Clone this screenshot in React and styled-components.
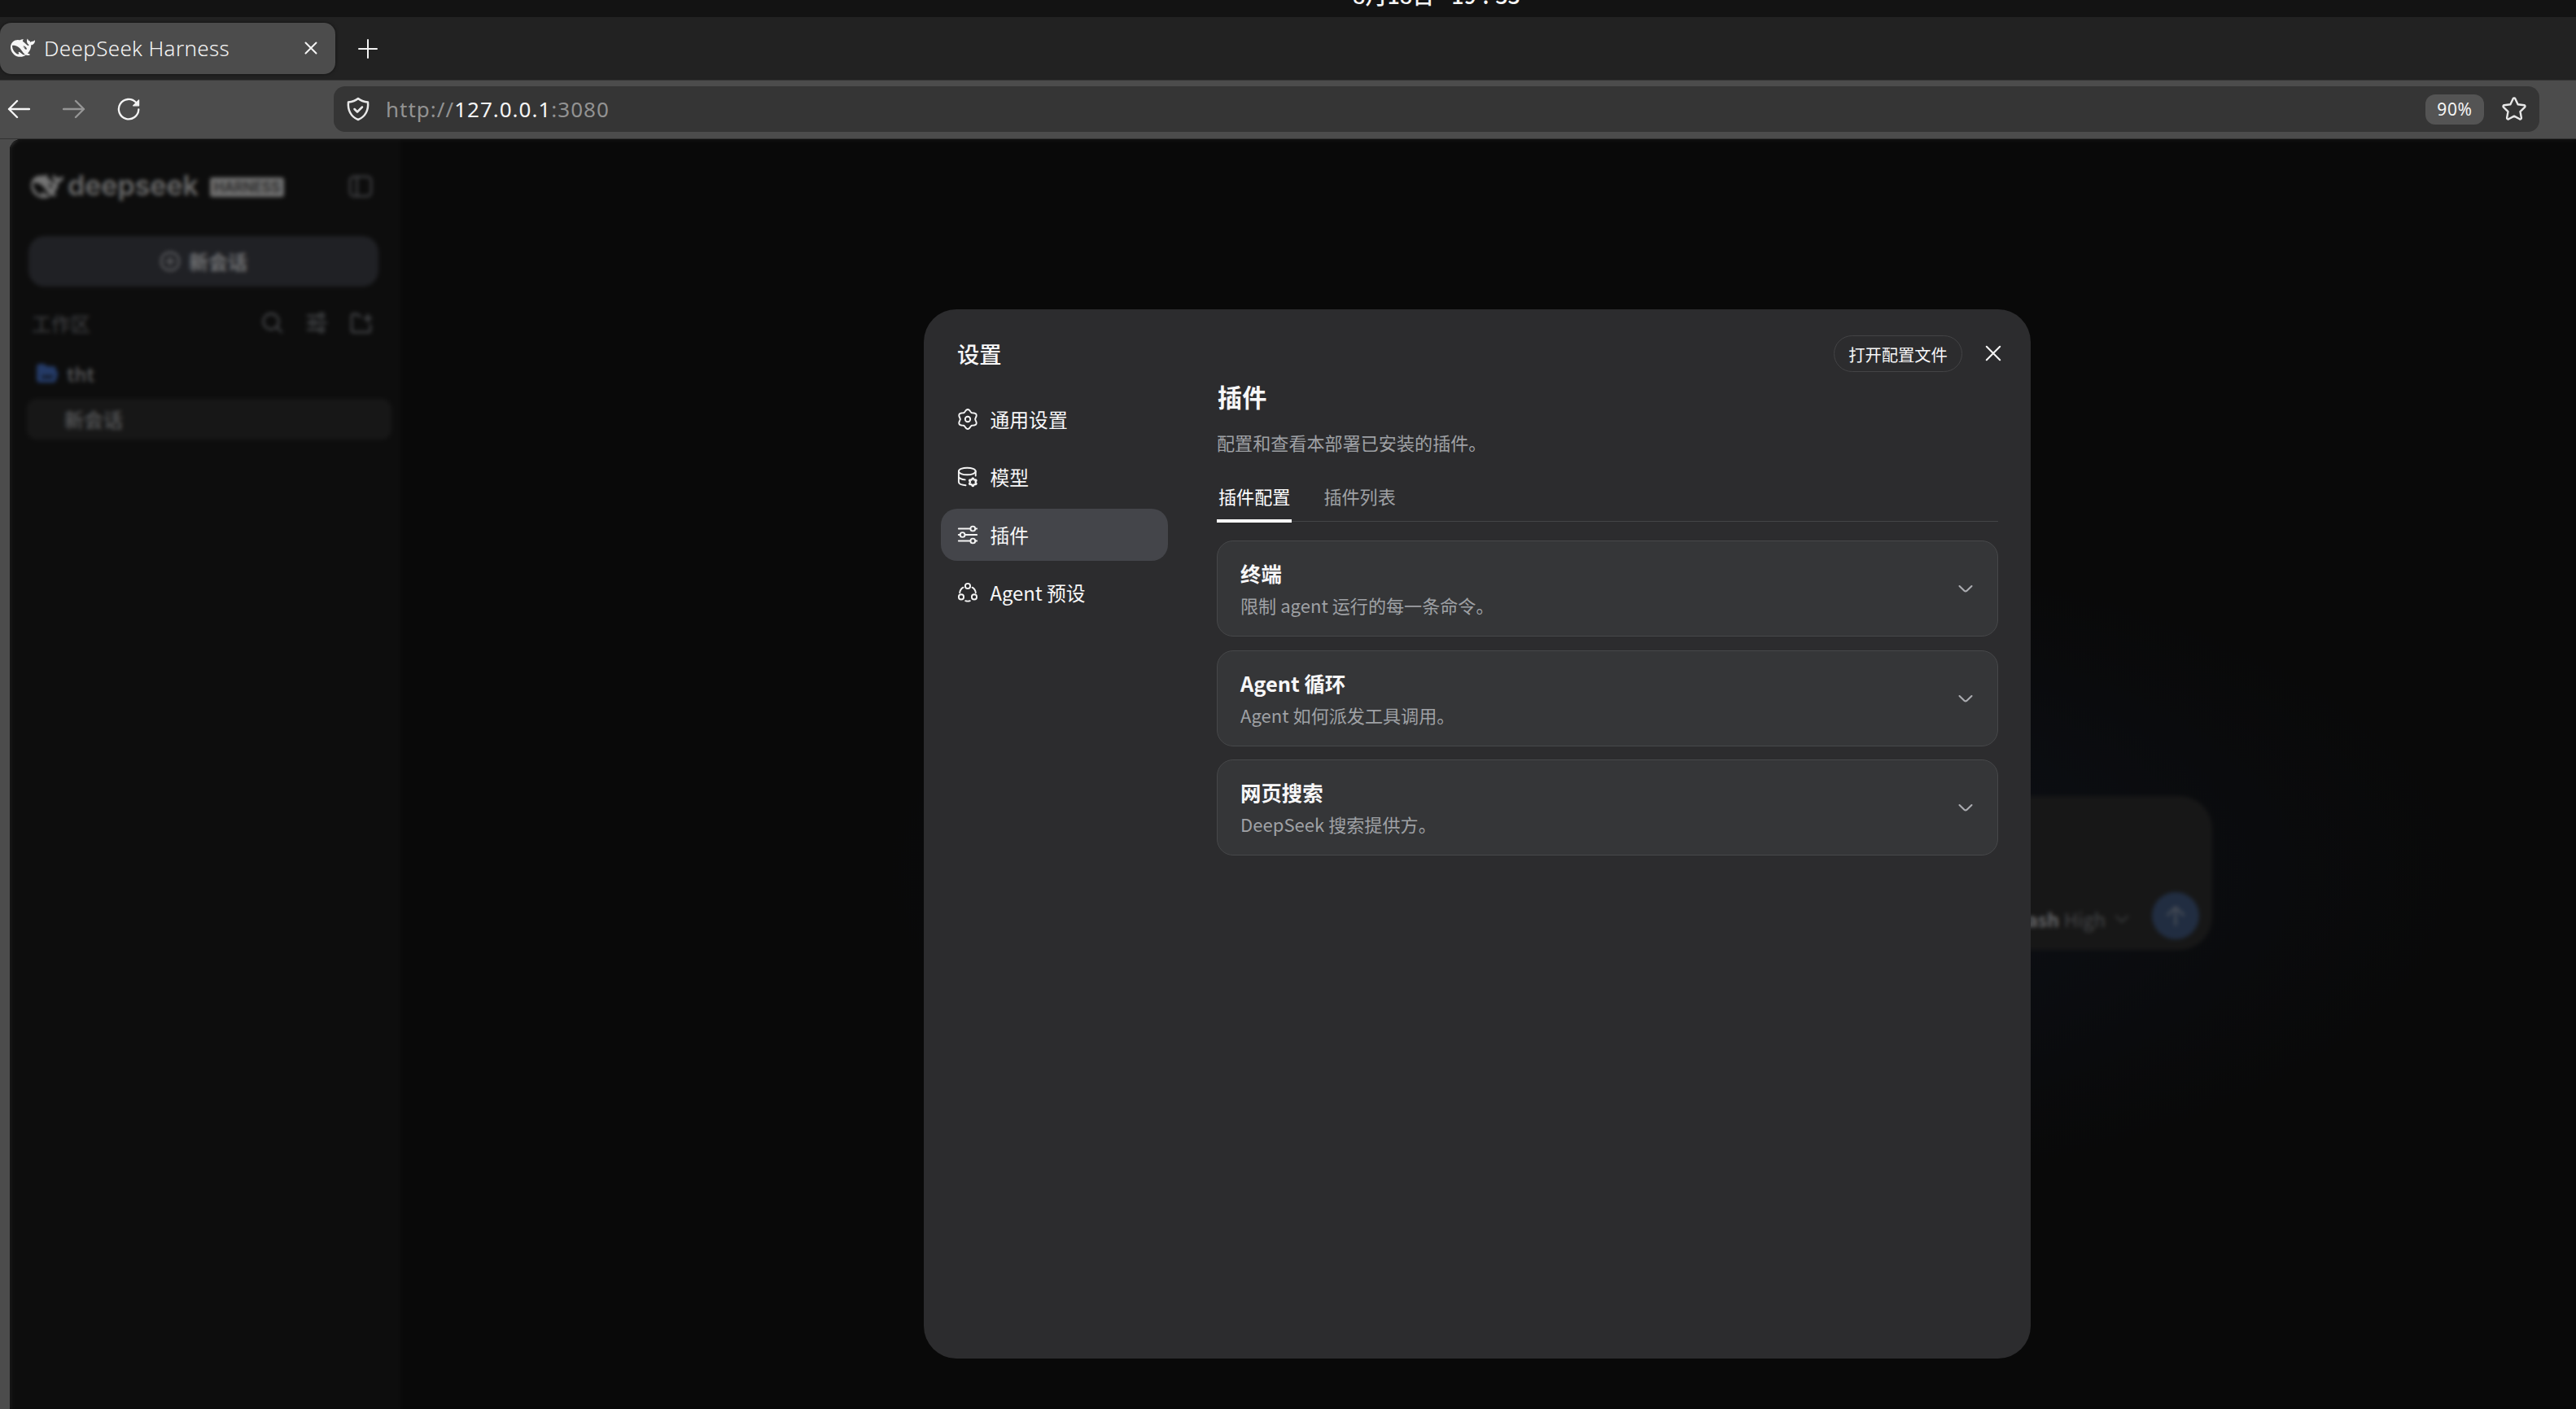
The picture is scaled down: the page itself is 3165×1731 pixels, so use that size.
import styled, { createGlobalStyle, css } from 'styled-components';

const GlobalStyle = createGlobalStyle`
	* {
		box-sizing: border-box;
	}

	body {
		margin: 0;
		background: #090909;
		font-family: 'Noto Sans CJK SC', sans-serif;
	}

	button {
		margin: 0;
		padding: 0;
		border: 0;
		background: none;
		color: inherit;
		font: inherit;
	}

	svg {
		display: block;
		flex: none;
	}
`;

const NAV = [
	{ label: '通用设置', Icon: GearIcon },
	{ label: '模型', Icon: ModelIcon },
	{ label: '插件', Icon: SlidersIcon, active: true },
	{ label: 'Agent 预设', Icon: AgentIcon },
];

const PLUGINS = [
	{ title: '终端', text: '限制 agent 运行的每一条命令。' },
	{ title: 'Agent 循环', text: 'Agent 如何派发工具调用。' },
	{ title: '网页搜索', text: 'DeepSeek 搜索提供方。' },
];

export default function App() {
	return (
		<Screen>
			<GlobalStyle />
			<SystemBar>
				<Clock>8月18日&ensp; 19 : 33</Clock>
			</SystemBar>
			<TabStrip>
				<BrowserTab>
					<Whale size={30} />
					<TabTitle>DeepSeek Harness</TabTitle>
					<Stroke size={16} box={16} width={2}>
						<path d="M1.5 1.5l13 13M14.5 1.5l-13 13" />
					</Stroke>
				</BrowserTab>
				<Stroke size={24} box={24} width={2}>
					<path d="M12 1v22M1 12h22" />
				</Stroke>
			</TabStrip>
			<Toolbar>
				<NavButtons>
					<Stroke size={28} box={28} width={2.4}>
						<path d="M27 14H2M12 4L2 14l10 10" />
					</Stroke>
					<Stroke size={28} box={28} width={2.4} color="#959595">
						<path d="M1 14h25M16 4l10 10-10 10" />
					</Stroke>
					<Stroke size={28} box={28} width={2.3}>
						<path d="M26.3 14.5A12.2 12.2 0 1 1 23 5.8" />
						<path d="M26.6 2.8v7h-7z" fill="currentColor" strokeWidth="1.2" />
					</Stroke>
				</NavButtons>
				<AddressBar>
					<Stroke size={30} box={30} width={2.5} color="#e8e8e8">
						<path d="M15 2c3 2.600 7 4 12 4.500C28 16 24 24.500 15 28 6 24.500 2 16 3 6.500 8 6 12 4.600 15 2z" />
						<path d="M10.500 15l3.500 3.500 6-6" />
					</Stroke>
					<Url>
						http://<b>127.0.0.1</b>:3080
					</Url>
					<ZoomChip>90%</ZoomChip>
					<Stroke size={32} box={32} width={2.4} color="#e8e8e8">
						<path d="M14.700 3.200a1.500 1.500 0 0 1 2.600 0l3.300 7 7.700 1a1.500 1.500 0 0 1 .8 2.500l-5.600 5.400 1.400 7.600a1.500 1.500 0 0 1-2.100 1.600L16 24.600l-6.800 3.700a1.500 1.500 0 0 1-2.100-1.600l1.400-7.600-5.600-5.400a1.500 1.500 0 0 1 .8-2.500l7.700-1z" />
					</Stroke>
				</AddressBar>
			</Toolbar>
			<Viewport>
				<Page>
					<Sidebar />
					<Main>
						<Composer>
							<ModelName>Flash</ModelName>
							<Effort>High</Effort>
							<Stroke size={18} box={18} width={2} color="#3a3b3d">
								<path d="M2 5.500l7 7 7-7" />
							</Stroke>
							<SendButton>
								<Stroke size={26} box={26} width={3} color="#454b55">
									<path d="M13 24V3M3.500 12L13 2.500 22.500 12" />
								</Stroke>
							</SendButton>
						</Composer>
					</Main>
					<Backdrop>
						<Settings />
					</Backdrop>
				</Page>
			</Viewport>
		</Screen>
	);
}

function Sidebar() {
	return (
		<SidebarPanel>
			<Brand>
				<Whale size={40} />
				<Wordmark>deepseek</Wordmark>
				<BrandBadge>HARNESS</BrandBadge>
				<Stroke size={30} box={30} width={2.4} color="#434447">
					<rect x="2" y="3" width="26" height="24" rx="5" />
					<path d="M10.500 3v24" />
				</Stroke>
			</Brand>
			<NewChat>
				<Stroke size={26} box={26} width={2.4} color="#5c5d60">
					<circle cx="13" cy="13" r="11" />
					<path d="M13 8v10M8 13h10" />
				</Stroke>
				<Label>新会话</Label>
			</NewChat>
			<SectionRow>
				<span>工作区</span>
				<Stroke size={27} box={27} width={2.3} color="#484a4d">
					<circle cx="12" cy="12" r="9.500" />
					<path d="M19 19l6 6" />
				</Stroke>
				<Stroke size={27} box={27} width={2.3} color="#484a4d">
					<path d="M2 5h13M2 13.500h3M12 13.500h13M2 22h13" />
					<circle cx="19" cy="5" r="3" />
					<circle cx="8.500" cy="13.500" r="3" />
					<circle cx="19" cy="22" r="3" />
				</Stroke>
				<Stroke size={27} box={27} width={2.3} color="#484a4d">
					<path d="M13 5.500h-2L9 3H4a2 2 0 0 0-2 2v18a2 2 0 0 0 2 2h19a2 2 0 0 0 2-2v-7M22 3.500v9M17.500 8h9" />
				</Stroke>
			</SectionRow>
			<FolderRow>
				<svg width="30" height="28" viewBox="0 0 30 28">
					<path
						d="M2 6a4 4 0 0 1 4-4h5l4 3h7a4 4 0 0 1 4 4v2a3 3 0 0 1 2 4l-2 7a4 4 0 0 1-4 3H6a4 4 0 0 1-4-4z"
						fill="#243a66"
					/>
					<path d="M9 16h14l-2 4H8z" fill="#131a28" />
				</svg>
				<Label>tht</Label>
			</FolderRow>
			<SessionRow>
				<Label>新会话</Label>
			</SessionRow>
		</SidebarPanel>
	);
}

function Settings() {
	return (
		<Dialog>
			<DialogHeader>
				<DialogTitle>设置</DialogTitle>
				<PillButton>打开配置文件</PillButton>
				<Stroke size={20} box={20} width={2.1}>
					<path d="M1.800 1.800l16.400 16.400M18.200 1.800L1.800 18.200" />
				</Stroke>
			</DialogHeader>
			<DialogBody>
				<NavList>
					{NAV.map(({ label, Icon, active }) => (
						<NavItem key={label} $active={active}>
							<Icon />
							<Label>{label}</Label>
						</NavItem>
					))}
				</NavList>
				<Content>
					<Heading>插件</Heading>
					<Lead>配置和查看本部署已安装的插件。</Lead>
					<Tabs>
						<Tab $active>插件配置</Tab>
						<Tab>插件列表</Tab>
					</Tabs>
					<CardList>
						{PLUGINS.map(({ title, text }) => (
							<Card key={title}>
								<div>
									<CardTitle>{title}</CardTitle>
									<CardText>{text}</CardText>
								</div>
								<Stroke size={20} box={20} width={2.1} color="#abacb1">
									<path d="M2.500 7l5.900 5.700q1.600 1.500 3.200 0l5.900-5.700" />
								</Stroke>
							</Card>
						))}
					</CardList>
				</Content>
			</DialogBody>
		</Dialog>
	);
}

function Stroke({ size, box, width, color = '#f4f4f4', children }) {
	return (
		<svg
			width={size}
			height={size}
			viewBox={`0 0 ${box} ${box}`}
			fill="none"
			stroke="currentColor"
			strokeWidth={width}
			strokeLinecap="round"
			strokeLinejoin="round"
			color={color}
		>
			{children}
		</svg>
	);
}

function Whale({ size }) {
	return (
		<svg width={size} height={size} viewBox="0 0 24 24" fill="currentColor">
			<path d="M23.748 4.482c-.254-.124-.364.113-.512.234-.051.039-.094.09-.137.136-.372.397-.806.657-1.373.626-.829-.046-1.537.214-2.163.848-.133-.782-.575-1.248-1.247-1.548-.352-.156-.708-.311-.955-.65-.172-.241-.219-.51-.305-.774-.055-.16-.11-.323-.293-.35-.2-.031-.278.136-.356.276-.313.572-.434 1.202-.422 1.84.027 1.436.633 2.58 1.838 3.393.137.093.172.187.129.323-.082.28-.18.552-.266.833-.055.179-.137.217-.329.14a5.526 5.526 0 01-1.736-1.18c-.857-.828-1.631-1.742-2.597-2.458a11.365 11.365 0 00-.689-.471c-.985-.957.13-1.743.388-1.836.27-.098.093-.432-.779-.428-.872.004-1.67.295-2.687.684a3.055 3.055 0 01-.465.137 9.597 9.597 0 00-2.883-.102c-1.885.21-3.39 1.102-4.497 2.623C.082 8.606-.231 10.684.152 12.85c.403 2.284 1.569 4.175 3.36 5.653 1.858 1.533 3.997 2.284 6.438 2.14 1.482-.085 3.133-.284 4.994-1.86.47.234.962.327 1.78.397.63.059 1.236-.03 1.705-.128.735-.156.684-.837.419-.961-2.155-1.004-1.682-.595-2.113-.926 1.096-1.296 2.746-2.642 3.392-7.003.05-.347.007-.565 0-.845-.004-.17.035-.237.23-.256a4.173 4.173 0 001.545-.475c1.396-.763 1.96-2.015 2.093-3.517.02-.23-.004-.467-.247-.588zM11.581 18c-2.089-1.642-3.102-2.183-3.52-2.16-.392.024-.321.471-.235.763.09.288.207.486.371.739.114.167.192.416-.113.603-.673.416-1.842-.14-1.897-.167-1.361-.802-2.5-1.86-3.301-3.307-.774-1.393-1.224-2.887-1.298-4.482-.02-.386.093-.522.477-.592a4.696 4.696 0 011.529-.039c2.132.312 3.946 1.265 5.468 2.774.868.86 1.525 1.887 2.202 2.891.72 1.066 1.494 2.082 2.48 2.914.348.292.625.514.891.677-.802.09-2.14.11-3.054-.614zm1-6.44a.306.306 0 01.415-.287.302.302 0 01.2.288.306.306 0 01-.31.307.303.303 0 01-.304-.308zm3.11 1.596c-.2.081-.399.151-.59.16a1.245 1.245 0 01-.798-.254c-.274-.23-.47-.358-.552-.758a1.73 1.73 0 01.016-.588c.07-.327-.008-.537-.239-.727-.187-.156-.426-.199-.688-.199a.559.559 0 01-.254-.078c-.11-.054-.2-.19-.114-.358.028-.054.16-.186.192-.21.356-.202.767-.136 1.146.016.352.144.618.408 1.001.782.391.451.462.576.685.914.176.265.336.537.445.848.067.195-.019.354-.25.452z" />
		</svg>
	);
}

// closed outline with six rounded lobes, one of them pointing up
function lobes(cx, cy, radius, depth) {
	const points = [];
	for (let deg = 0; deg < 360; deg += 5) {
		const a = (deg * Math.PI) / 180;
		const r = radius + depth * Math.cos(6 * a);
		points.push(`${(cx + r * Math.sin(a)).toFixed(2)} ${(cy - r * Math.cos(a)).toFixed(2)}`);
	}
	return `M${points.join('L')}z`;
}

function GearIcon() {
	return (
		<Stroke size={26} box={26} width={1.9}>
			<path d={lobes(13, 13, 10.6, 1.4)} />
			<circle cx="13" cy="13" r="3.200" />
		</Stroke>
	);
}

function ModelIcon() {
	return (
		<Stroke size={26} box={26} width={1.9}>
			<ellipse cx="12.300" cy="6" rx="10.400" ry="4.300" />
			<path d="M1.900 6v13c0 2.200 3.600 3.800 8.600 4.200M22.700 6v5.500M1.900 13c.8 1.700 3.600 3 7.800 3.400" />
			<path d={lobes(19.3, 19.3, 4, 0.8)} strokeWidth="2.200" />
		</Stroke>
	);
}

function SlidersIcon() {
	return (
		<Stroke size={26} box={26} width={1.9}>
			<path d="M1.800 5.500h14.500M22.500 5.500h1.700M1.800 13h1.700M9.700 13h14.500M1.800 20.500h14.500M22.500 20.500h1.700" />
			<circle cx="19.300" cy="5.500" r="2.900" />
			<circle cx="6.600" cy="13" r="2.900" />
			<circle cx="19.300" cy="20.500" r="2.900" />
		</Stroke>
	);
}

function AgentIcon() {
	return (
		<Stroke size={26} box={26} width={1.9}>
			<circle cx="13" cy="5" r="3.100" />
			<circle cx="5" cy="18.400" r="3.100" />
			<circle cx="21" cy="18.400" r="3.100" />
			<path d="M3.200 13.200c.3-2.800 2-5.200 4.300-6.500M22.800 13.200c-.3-2.800-2-5.200-4.300-6.500M10.200 23.200c1.800.6 3.800.6 5.600 0" />
		</Stroke>
	);
}

const Screen = styled.div`
	width: 3165px;
	height: 1731px;
	overflow: hidden;
	display: flex;
	flex-direction: column;
	background: #4c4c4c;
	color: #f5f5f5;
`;

/* only the foot of the system bar is on screen */
const SystemBar = styled.div`
	flex: none;
	height: 21px;
	overflow: hidden;
	background: #131313;
	display: flex;
	align-items: flex-end;
	padding: 0 0 11px 1662px;
`;

const Clock = styled.span`
	font-size: 27px;
	line-height: 32px;
	font-weight: 500;
	word-spacing: 1.5px;
	white-space: nowrap;
`;

const TabStrip = styled.div`
	flex: none;
	height: 78px;
	background: #222;
	border-bottom: 1px solid #353535;
	display: flex;
	align-items: center;
	gap: 28px;
`;

const BrowserTab = styled.div`
	width: 412px;
	height: 63px;
	margin-bottom: 1px;
	padding: 0 22px 0 13px;
	display: flex;
	align-items: center;
	gap: 11px;
	border-radius: 14px;
	background: #4c4c4c;
	box-shadow: 0 0 4px rgba(0, 0, 0, 0.5);
`;

const TabTitle = styled.span`
	flex: 1;
	font-family: 'Noto Sans', sans-serif;
	font-size: 26px;
	font-weight: 300;
	letter-spacing: 0.35px;
	white-space: nowrap;
`;

const Toolbar = styled.div`
	flex: none;
	height: 72px;
	display: flex;
	align-items: center;
	background: #4c4c4c;
	border-bottom: 1px solid #333;
`;

const NavButtons = styled.div`
	width: 410px;
	margin-bottom: 1px;
	padding-left: 9px;
	display: flex;
	gap: 39.5px;
`;

const AddressBar = styled.div`
	width: 2710px;
	height: 56px;
	margin-bottom: 1px;
	padding: 0 15px;
	display: flex;
	align-items: center;
	border-radius: 14px;
	background: #353535;
	font-family: 'Noto Sans', sans-serif;
`;

const Url = styled.span`
	flex: 1;
	margin: -1px 0 0 19px;
	font-size: 26px;
	letter-spacing: 1px;
	color: #929292;

	b {
		font-weight: 400;
		color: #f6f6f6;
	}
`;

const ZoomChip = styled.span`
	width: 72px;
	height: 37px;
	margin-right: 21px;
	border-radius: 12px;
	background: #545454;
	font-size: 21px;
	letter-spacing: 0.6px;
	line-height: 37px;
	text-align: center;
`;

const Viewport = styled.div`
	flex: 1;
	min-height: 0;
	padding-left: 12px;
`;

/* the page runs on past the right and bottom edges of the screen */
const Page = styled.div`
	position: relative;
	width: 3606px;
	height: 1707px;
	display: flex;
	overflow: hidden;
	border-top-left-radius: 14px;
	background: #090909;
`;

const SidebarPanel = styled.aside`
	width: 480px;
	padding: 36px 11px 0 21px;
	background: #0d0d0d;
	color: #5a5b5d;
	font-size: 24px;
`;

const Label = styled.span`
	margin-top: -2px;
`;

const Brand = styled.div`
	height: 44px;
	padding: 0 23px 0 5px;
	display: flex;
	align-items: center;
	color: #747474;

	> svg:last-child {
		margin-left: auto;
	}
`;

const Wordmark = styled.span`
	width: 164px;
	margin: -2px 10px 0 5px;
	color: #6a6a6a;
	font-family: Inter, sans-serif;
	font-size: 34px;
	font-weight: 600;
	line-height: 44px;
`;

const BrandBadge = styled.span`
	width: 91px;
	height: 24px;
	margin: 1px 0 0 1px;
	border-radius: 3px;
	background: #6e6e6e;
	color: #2a2a2a;
	font-family: Inter, sans-serif;
	font-size: 17px;
	font-weight: 600;
	line-height: 24px;
	text-align: center;
`;

const NewChat = styled.button`
	width: 430px;
	height: 62px;
	margin: 39px 0 0 2px;
	display: flex;
	align-items: center;
	justify-content: center;
	gap: 10px;
	border-radius: 20px;
	background: #202125;
	color: #717274;
	font-weight: 700;
`;

const SectionRow = styled.div`
	height: 36px;
	margin-top: 26px;
	padding: 0 24px 0 6px;
	display: flex;
	align-items: center;
	gap: 27.5px;
	color: #434447;

	span {
		flex: 1;
	}
`;

const FolderRow = styled.div`
	height: 50px;
	margin-top: 20px;
	padding-left: 10px;
	display: flex;
	align-items: center;
	gap: 9px;
	font-weight: 500;
`;

const SessionRow = styled.div`
	height: 50px;
	margin-top: 6px;
	padding-left: 46px;
	display: flex;
	align-items: center;
	border-radius: 12px;
	background: #171717;
	font-weight: 500;
`;

const Main = styled.main`
	flex: 1;
	display: flex;
	align-items: center;
	justify-content: center;
	padding-top: 96px;
	background: radial-gradient(ellipse 980px 410px at 50% 52.8%, #0c1017 0%, #0c0e13 45%, #0a0b0d 75%, #090909 100%);
`;

const Composer = styled.div`
	width: 1326px;
	height: 189px;
	padding: 0 16px 13px;
	display: flex;
	align-items: flex-end;
	justify-content: flex-end;
	border-radius: 40px;
	background: #171717;
	font-size: 23.5px;
	line-height: 50px;

	> svg {
		margin: 0 28px 16px 11px;
	}
`;

const ModelName = styled.span`
	color: #66676a;
	font-weight: 700;
	font-size: 23px;
`;

const Effort = styled.span`
	margin-left: 6px;
	color: #46474a;
`;

const SendButton = styled.button`
	width: 58px;
	height: 58px;
	display: flex;
	align-items: center;
	justify-content: center;
	border-radius: 50%;
	background: #212d41;
`;

const Backdrop = styled.div`
	position: absolute;
	inset: 0;
	display: flex;
	align-items: center;
	justify-content: center;
	backdrop-filter: blur(2.8px);
`;

const Dialog = styled.section`
	width: 1360px;
	height: 1289px;
	padding: 31px 40px 0 21px;
	border-radius: 40px;
	background: #2c2c2e;
	color: #f7f7f8;
`;

const DialogHeader = styled.header`
	height: 46px;
	margin-right: -4px;
	padding-left: 20px;
	display: flex;
	align-items: center;
`;

const DialogTitle = styled.h1`
	flex: 1;
	margin: 0;
	font-size: 27.3px;
	font-weight: 500;
	line-height: 40px;
`;

const PillButton = styled.button`
	width: 158px;
	height: 45px;
	margin-right: 28px;
	border: 1px solid #434345;
	border-radius: 23px;
	font-size: 20.3px;
	line-height: 44px;
`;

const DialogBody = styled.div`
	display: flex;
	justify-content: space-between;
`;

const NavList = styled.nav`
	width: 279px;
	padding-top: 26px;
	display: flex;
	flex-direction: column;
	gap: 7px;
`;

const NavItem = styled.button`
	height: 64px;
	padding: 0 20px;
	display: flex;
	align-items: center;
	gap: 14.5px;
	border-radius: 20px;
	font-size: 23.8px;

	${({ $active }) =>
		$active &&
		css`
			background: #44454a;
		`}
`;

const Content = styled.div`
	width: 960px;
	padding-top: 8px;
`;

const Heading = styled.h2`
	margin: 0 0 0 1px;
	font-size: 30.2px;
	font-weight: 700;
	line-height: 44px;
`;

const Lead = styled.p`
	margin: 18px 0 0;
	color: #9fa1a5;
	font-size: 22.1px;
	line-height: 32px;
`;

const Tabs = styled.div`
	height: 60px;
	margin-top: 22px;
	display: flex;
	gap: 37px;
	border-bottom: 1px solid #434446;
`;

const Tab = styled.button`
	height: 61px;
	padding: 0 2px 2px;
	border-radius: 3px 3px 0 0;
	border-bottom: 4px solid ${({ $active }) => ($active ? '#fff' : 'transparent')};
	color: ${({ $active }) => ($active ? '#fff' : '#9fa1a5')};
	font-size: 22.1px;
`;

const CardList = styled.div`
	margin-top: 23px;
	display: flex;
	flex-direction: column;
	gap: 16.5px;
`;

const Card = styled.article`
	height: 118px;
	padding: 0 29px 0 28px;
	display: flex;
	align-items: center;
	justify-content: space-between;
	border: 1px solid #47484a;
	border-radius: 20px;
	background: #353638;
`;

const CardTitle = styled.h3`
	margin: 1px 0 -1px;
	font-size: 25.4px;
	font-weight: 700;
	line-height: 40px;
`;

const CardText = styled.p`
	margin: 0;
	color: #9fa1a5;
	font-size: 22.1px;
	line-height: 40px;
`;
